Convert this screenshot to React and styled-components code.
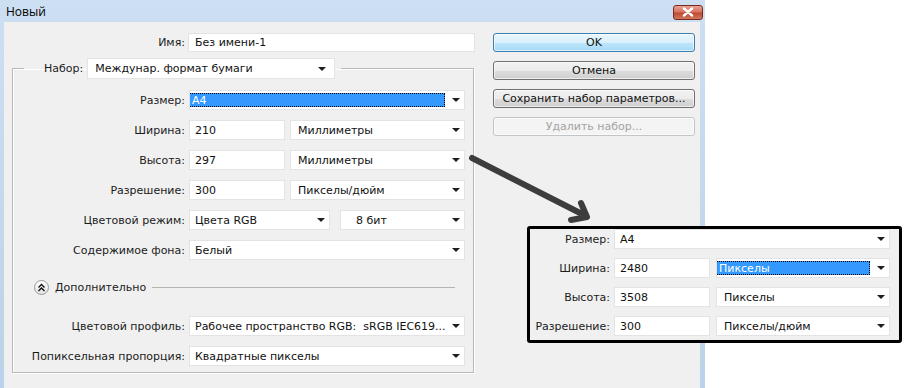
import React from "react";
import styled, { createGlobalStyle } from "styled-components";

const GlobalStyle = createGlobalStyle`
  html, body { margin: 0; padding: 0; background: #ffffff; }
  body {
    font-family: "DejaVu Sans", "Liberation Sans", sans-serif;
    font-size: 11px;
    color: #1b1b1b;
  }
`;

const Page = styled.div`
  position: relative;
  width: 906px;
  height: 388px;
  overflow: hidden;
  background: #ffffff;
`;

const Window = styled.div`
  width: 705px;
  height: 388px;
  display: flex;
  flex-direction: column;
  background: linear-gradient(#cddff2, #bcd2ea);
`;

const TitleBar = styled.div`
  height: 22px;
  flex: none;
  display: flex;
  align-items: center;
  justify-content: space-between;
  padding: 0 2px 0 6px;
  font-family: "Open Sans", "DejaVu Sans", sans-serif;
  font-size: 12px;
  color: #000;
`;

const CloseBtn = styled.div`
  width: 30px;
  height: 15px;
  margin-top: 2px;
  border: 1px solid #7a2a20;
  border-radius: 3px;
  display: flex;
  align-items: center;
  justify-content: center;
  background: linear-gradient(#e8a293 0%, #d5745f 45%, #c04a30 55%, #d07a5c 100%);
  box-sizing: border-box;
`;

const Body = styled.div`
  flex: 1;
  margin: 0 5px 0 4px;
  background: #f0f0f0;
  display: flex;
  padding-top: 11px;
`;

const FormColumn = styled.div`
  width: 471px;
  display: flex;
  flex-direction: column;
`;

const NameRow = styled.div`
  display: flex;
  align-items: center;
  height: 19px;
`;

const Label = styled.span`
  text-align: right;
  white-space: nowrap;
  color: #1b1b1b;
`;

const NameLabel = styled(Label)`
  width: 181px;
  margin-right: 3px;
`;

const Field = styled.div`
  box-sizing: border-box;
  height: ${(p) => p.$h || 20}px;
  width: ${(p) => p.$w}px;
  background: #ffffff;
  border: 1px solid #e3e3e3;
  display: flex;
  align-items: center;
  padding-left: ${(p) => p.$pad ?? 5}px;
  color: #111;
  white-space: nowrap;
  overflow: hidden;
  position: relative;
`;

const Arrow = styled.span`
  position: absolute;
  right: ${(p) => p.$right || 4}px;
  top: 50%;
  margin-top: -2px;
  width: 0;
  height: 0;
  border-left: 4px solid transparent;
  border-right: 4px solid transparent;
  border-top: 4px solid #1e1e1e;
`;

const Highlight = styled.span`
  flex: 1;
  align-self: stretch;
  margin: 2px 19px 2px -4px;
  background: #3399ff;
  color: #fff;
  outline: 1px dotted #000;
  outline-offset: -1px;
  display: flex;
  align-items: center;
  padding-left: 4px;
`;

const Group = styled.fieldset`
  margin: 6px 0 0 8px;
  width: 461px;
  box-sizing: border-box;
  border: 1px solid #b9b9b9;
  box-shadow: inset 1px 1px 0 #fff, 1px 1px 0 #fff;
  padding: 11px 8px 6px 0;
  display: flex;
  flex-direction: column;
`;

const Legend = styled.legend`
  margin-left: 11px;
  padding: 0 6px 0 20px;
  display: flex;
  align-items: center;
  gap: 4px;
`;

const Rows = styled.div`
  display: flex;
  flex-direction: column;
  gap: 10px;
`;

const Row = styled.div`
  display: grid;
  grid-template-columns: ${(p) => p.$label}px 1fr;
  column-gap: 4px;
  align-items: center;
  height: 20px;
`;

const Fields = styled.div`
  display: flex;
  gap: ${(p) => p.$gap || 5}px;
`;

const Advanced = styled.div`
  display: flex;
  align-items: center;
  height: 16px;
  margin: 19px 10px 21px 21px;
  gap: 6px;
`;

const Toggle = styled.span`
  width: 13px;
  height: 13px;
  border-radius: 50%;
  border: 1px solid #9a9a9a;
  background: linear-gradient(#ffffff, #e2e2e2);
  display: flex;
  align-items: center;
  justify-content: center;
`;

const Rule = styled.span`
  flex: 1;
  height: 1px;
  background: #b4b4b4;
`;

const ButtonColumn = styled.div`
  margin-left: 18px;
  width: 202px;
  display: flex;
  flex-direction: column;
  gap: 9px;
`;

const Button = styled.div`
  box-sizing: border-box;
  height: 19px;
  border-radius: 3px;
  display: flex;
  align-items: center;
  justify-content: center;
  border: 1px solid ${(p) => (p.$primary ? "#3c7fb1" : p.$disabled ? "#c2c5c8" : "#707070")};
  color: ${(p) => (p.$disabled ? "#a3a3a3" : "#111")};
  background: ${(p) =>
    p.$primary
      ? "linear-gradient(#eaf6fd 0%, #d9f0fc 50%, #bee6fd 51%, #a7d9f5 100%)"
      : p.$disabled
      ? "#f4f4f4"
      : "linear-gradient(#f2f2f2 0%, #ebebeb 50%, #dddddd 51%, #cfcfcf 100%)"};
  box-shadow: inset 0 0 0 1px rgba(255, 255, 255, 0.6);
`;

const Callout = styled.div`
  position: absolute;
  left: 527px;
  top: 226px;
  width: 375px;
  box-sizing: border-box;
  border: 3px solid #000;
  border-radius: 3px;
  background: #f0f0f0;
  padding: 0 8px 4px 0;
  display: flex;
  flex-direction: column;
  gap: 9px;
`;

const ArrowSvg = styled.svg`
  position: absolute;
  left: 0;
  top: 0;
  pointer-events: none;
`;

const Dropdown = ({ w, children, selected, pad = 7 }) => (
  <Field $w={w} $pad={selected ? 2 : pad}>
    {selected ? <Highlight>{children}</Highlight> : children}
    <Arrow />
  </Field>
);

const Chevrons = () => (
  <svg width="9" height="9" viewBox="0 0 9 9">
    <path d="M1.5 4.5 L4.5 1.5 L7.5 4.5 M1.5 8 L4.5 5 L7.5 8" stroke="#111" strokeWidth="1.4" fill="none" />
  </svg>
);

export default function App() {
  return (
    <Page>
      <GlobalStyle />
      <Window>
        <TitleBar>
          <span>Новый</span>
          <CloseBtn>
            <svg width="12" height="10" viewBox="0 0 12 10">
              <path d="M2 1.5 L10 8.5 M10 1.5 L2 8.5" stroke="#fff" strokeWidth="2.4" strokeLinecap="round" />
            </svg>
          </CloseBtn>
        </TitleBar>
        <Body>
          <FormColumn>
            <NameRow>
              <NameLabel>Имя:</NameLabel>
              <Field $w={287} $h={19} $pad={6}>Без имени-1</Field>
            </NameRow>
            <Group>
              <Legend>
                <Label>Набор:</Label>
                <Field $w={248} $h={21} $pad={7}>
                  Междунар. формат бумаги
                  <Arrow $right={8} />
                </Field>
              </Legend>
              <Rows>
                <Row $label={172}>
                  <Label>Размер:</Label>
                  <Dropdown w={276} selected>A4</Dropdown>
                </Row>
                <Row $label={172}>
                  <Label>Ширина:</Label>
                  <Fields>
                    <Field $w={96}>210</Field>
                    <Dropdown w={175}>Миллиметры</Dropdown>
                  </Fields>
                </Row>
                <Row $label={172}>
                  <Label>Высота:</Label>
                  <Fields>
                    <Field $w={96}>297</Field>
                    <Dropdown w={175}>Миллиметры</Dropdown>
                  </Fields>
                </Row>
                <Row $label={172}>
                  <Label>Разрешение:</Label>
                  <Fields>
                    <Field $w={96}>300</Field>
                    <Dropdown w={175}>Пикселы/дюйм</Dropdown>
                  </Fields>
                </Row>
                <Row $label={172}>
                  <Label>Цветовой режим:</Label>
                  <Fields $gap={10}>
                    <Dropdown w={141} pad={5}>Цвета RGB</Dropdown>
                    <Dropdown w={125} pad={15}>8 бит</Dropdown>
                  </Fields>
                </Row>
                <Row $label={172}>
                  <Label>Содержимое фона:</Label>
                  <Dropdown w={276} pad={5}>Белый</Dropdown>
                </Row>
              </Rows>
              <Advanced>
                <Toggle>
                  <Chevrons />
                </Toggle>
                <span>Дополнительно</span>
                <Rule />
              </Advanced>
              <Rows>
                <Row $label={172}>
                  <Label>Цветовой профиль:</Label>
                  <Dropdown w={276} pad={5}>Рабочее пространство RGB:&nbsp; sRGB IEC619...</Dropdown>
                </Row>
                <Row $label={172}>
                  <Label>Попиксельная пропорция:</Label>
                  <Dropdown w={276} pad={5}>Квадратные пикселы</Dropdown>
                </Row>
              </Rows>
            </Group>
          </FormColumn>
          <ButtonColumn>
            <Button $primary>OK</Button>
            <Button>Отмена</Button>
            <Button>Сохранить набор параметров...</Button>
            <Button $disabled>Удалить набор...</Button>
          </ButtonColumn>
        </Body>
      </Window>

      <ArrowSvg width="906" height="388">
        <path d="M472 158 L586 216" stroke="#3d3d3d" strokeWidth="6" strokeLinecap="round" fill="none" />
        <path d="M581 203 L587 217 L571 220" stroke="#3d3d3d" strokeWidth="6" strokeLinecap="round" strokeLinejoin="round" fill="none" />
      </ArrowSvg>

      <Callout>
        <Row $label={80}>
          <Label>Размер:</Label>
          <Dropdown w={276} pad={5}>A4</Dropdown>
        </Row>
        <Row $label={80}>
          <Label>Ширина:</Label>
          <Fields $gap={6}>
            <Field $w={96}>2480</Field>
            <Dropdown w={174} selected>Пикселы</Dropdown>
          </Fields>
        </Row>
        <Row $label={80}>
          <Label>Высота:</Label>
          <Fields $gap={6}>
            <Field $w={96}>3508</Field>
            <Dropdown w={174}>Пикселы</Dropdown>
          </Fields>
        </Row>
        <Row $label={80}>
          <Label>Разрешение:</Label>
          <Fields $gap={6}>
            <Field $w={96}>300</Field>
            <Dropdown w={174}>Пикселы/дюйм</Dropdown>
          </Fields>
        </Row>
      </Callout>
    </Page>
  );
}
